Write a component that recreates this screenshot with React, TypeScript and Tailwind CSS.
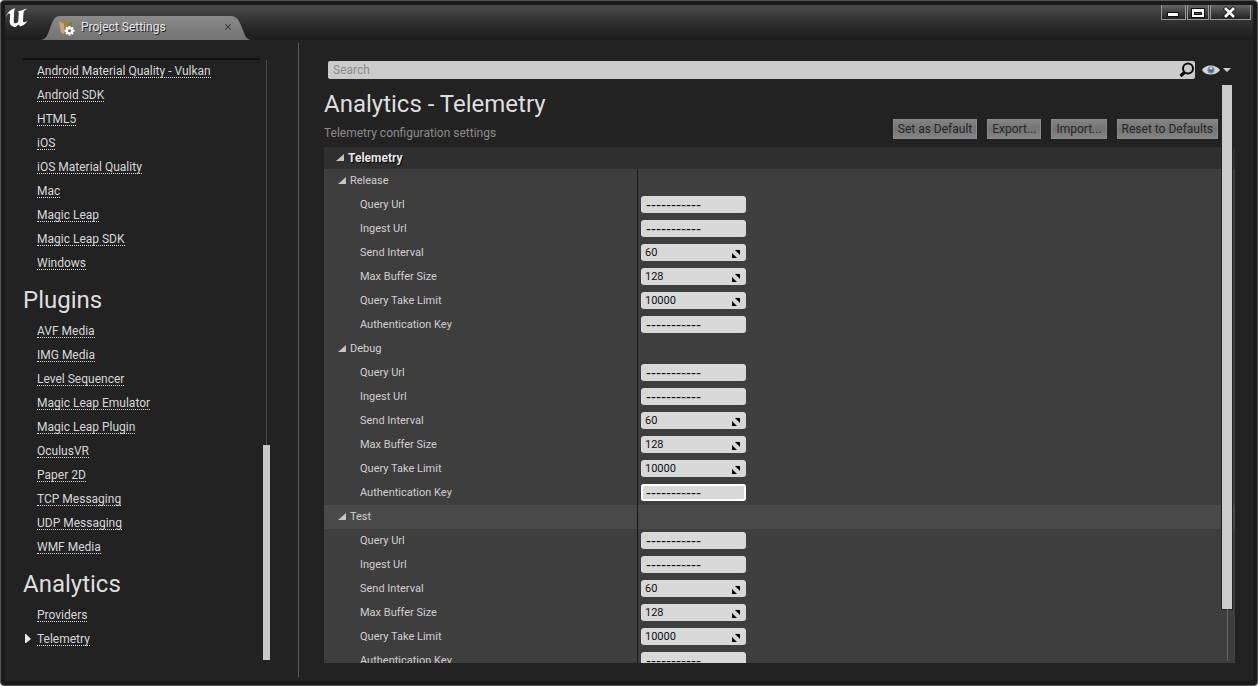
import React, { useState } from "react";

const platformLinks = [
  "Android Material Quality - Vulkan",
  "Android SDK",
  "HTML5",
  "iOS",
  "iOS Material Quality",
  "Mac",
  "Magic Leap",
  "Magic Leap SDK",
  "Windows",
];

const pluginLinks = [
  "AVF Media",
  "IMG Media",
  "Level Sequencer",
  "Magic Leap Emulator",
  "Magic Leap Plugin",
  "OculusVR",
  "Paper 2D",
  "TCP Messaging",
  "UDP Messaging",
  "WMF Media",
];

const analyticsLinks = ["Providers", "Telemetry"];

type Field = { label: string; value: string; numeric?: boolean };

const fields: Field[] = [
  { label: "Query Url", value: "-----------" },
  { label: "Ingest Url", value: "-----------" },
  { label: "Send Interval", value: "60", numeric: true },
  { label: "Max Buffer Size", value: "128", numeric: true },
  { label: "Query Take Limit", value: "10000", numeric: true },
  { label: "Authentication Key", value: "-----------" },
];

function UnrealLogo() {
  return (
    <svg viewBox="0 0 24 22" className="h-[22px] w-6" aria-hidden="true">
      <path
        d="M1 10.200C2 5.800 5.200 2.600 10.400 1.300C9.600 2.200 9.300 3.200 9.200 4.600L8.700 14C8.700 15.600 9.300 16.300 10.400 16.300C11.500 16.300 12.500 15.700 13.200 14.800L13.800 6C13.800 5.200 13.200 4.800 12.400 4.800C15 3.800 18.400 2.600 22.600 1.500C20 3 18.700 4.200 18.500 5.800L18 13.400C18 14.700 18.500 15.200 19.400 15.200C20.300 15.200 21.400 14.600 22.600 13.600C21.200 16.400 18.600 18.600 15.600 19.600L13.300 17.600L10.800 20C7.200 19.800 4.700 17.800 4.700 14.400L5.200 8C5.200 7 4.800 6.600 4 6.600C2.800 6.600 1.800 8.200 1 10.200Z"
        fill="#fff"
      />
    </svg>
  );
}

function TabIcon() {
  return (
    <svg viewBox="0 0 17 16" className="h-4 w-[17px]" aria-hidden="true">
      <path d="M1 1H6L7 2H14V9L10 14H5L3.500 13Z" fill="#a5814f" />
      <path d="M1 1L6 4V14L3 12.500Z" fill="#cfa772" />
      <path d="M12 2H14V7L9 5Z" fill="#73803a" />
      <path d="M11.500 6V15.500M6.500 10.700H16.500M8 7.500L15 14M15 7.500L8 14" stroke="#fff" strokeWidth="2" />
      <circle cx="11.500" cy="10.700" r="3.400" fill="#fff" />
      <circle cx="11.500" cy="10.700" r="1.500" fill="#6b6b6b" />
    </svg>
  );
}

function Expander() {
  return (
    <svg viewBox="0 0 8 8" className="size-2" aria-hidden="true">
      <path d="M8 0V7H0Z" fill="#c4c4c4" />
    </svg>
  );
}

function LinkList({ items, current }: { items: string[]; current?: string }) {
  return (
    <ul>
      {items.map((item) => (
        <li key={item} className="flex h-6 items-center">
          <span className="flex w-[14px] shrink-0">
            {item === current && (
              <svg viewBox="0 0 6 10" className="ml-0.5 h-[10px] w-1.5" aria-hidden="true">
                <path d="M0 0H1L6 5L1 9H0Z" fill="#e8e8e8" />
              </svg>
            )}
          </span>
          <a
            href="#"
            className="border-b border-dotted border-[#e0e0e0] text-xs leading-3 whitespace-nowrap text-[#d8d8d8]"
          >
            {item}
          </a>
        </li>
      ))}
    </ul>
  );
}

function SectionHeading({ children }: { children: React.ReactNode }) {
  return <h2 className="flex h-11 items-center pt-1.5 text-2xl text-[#dedede]">{children}</h2>;
}

function PropertyRow({ group, field, focused }: { group: string; field: Field; focused: boolean }) {
  const [value, setValue] = useState(field.value);
  const id = `${group}-${field.label}`.replace(/\s/g, "-").toLowerCase();
  return (
    <div className="flex h-6">
      <div className="flex w-[314px] shrink-0 items-center border-r border-[#181818] pl-9">
        <label htmlFor={id} className="text-[11px] leading-4 text-[#d0d0d0]">
          {field.label}
        </label>
      </div>
      <div className="flex items-start pt-[3px] pl-[3px]">
        <div
          className={
            focused
              ? "flex h-[17px] w-[105px] items-center rounded-[3px] bg-[#d8d8d8] px-1 ring-2 ring-white ring-inset"
              : "flex h-[17px] w-[105px] items-center rounded-[3px] bg-[#d8d8d8] px-1"
          }
        >
          <input
            id={id}
            value={value}
            onChange={(e) => setValue(e.target.value)}
            className={
              field.numeric
                ? "h-[15px] w-full min-w-0 bg-transparent text-[11px] leading-[15px] text-[#101010] outline-none"
                : "h-[15px] w-full min-w-0 bg-transparent pl-px font-['Liberation_Sans',sans-serif] text-[15px] leading-[15px] text-[#101010] outline-none"
            }
          />
          {field.numeric && (
            <svg viewBox="0 0 8 8" className="mt-0.5 mr-0.5 size-2 shrink-0" aria-hidden="true">
              <path d="M3 0H8V5ZM0 3L5 8H0Z" fill="#000" />
            </svg>
          )}
        </div>
      </div>
    </div>
  );
}

function PropertyGroup({ name, highlighted, focusedField }: { name: string; highlighted?: boolean; focusedField?: string }) {
  const [open, setOpen] = useState(true);
  return (
    <section>
      <div className={highlighted ? "flex h-6 bg-[#4a4a4a]" : "flex h-6"}>
        <button
          type="button"
          aria-expanded={open}
          onClick={() => setOpen(!open)}
          className="flex w-[314px] shrink-0 items-center gap-1 border-r border-[#181818] pl-[14px] text-[11px] leading-4 text-[#d0d0d0]"
        >
          <Expander />
          {name}
        </button>
      </div>
      {open &&
        fields.map((field) => (
          <PropertyRow key={field.label} group={name} field={field} focused={field.label === focusedField} />
        ))}
    </section>
  );
}

function ActionButton({ children }: { children: React.ReactNode }) {
  return (
    <button
      type="button"
      className="h-5 border border-[#8a8a8a] bg-linear-to-b from-[#848484] via-[#747474] to-[#848484] px-1 text-xs leading-4 whitespace-nowrap text-[#262626]"
    >
      {children}
    </button>
  );
}

function TitleBar() {
  return (
    <header className="flex h-[35px] shrink-0 items-start justify-between bg-linear-to-b from-[#4b4b4b] via-[#2a2a2a] via-60% to-[#1c1c1c]">
      <div className="flex h-full">
        <div className="pt-0.5">
          <UnrealLogo />
        </div>
        <div className="relative ml-3 flex h-full w-[210px] items-end">
          <svg viewBox="0 0 210 24" preserveAspectRatio="none" className="absolute bottom-0 left-0 h-6 w-full" aria-hidden="true">
            <defs>
              <linearGradient id="tab" x1="0" y1="0" x2="0" y2="1">
                <stop offset="0" stopColor="#8a8a8a" />
                <stop offset="1" stopColor="#737373" />
              </linearGradient>
            </defs>
            <path d="M0 24C5 23 6 20 8 15C11 8 12 0 19 0H190C197 0 199 7 202 14C204 20 205 23 210 24Z" fill="url(#tab)" />
          </svg>
          <div className="relative flex h-6 w-full items-center pr-5 pl-[17px]">
            <TabIcon />
            <span className="grow pb-0.5 pl-1.5 text-xs text-[#e8e8e8] [text-shadow:1px_1px_0_#222]">Project Settings</span>
            <button type="button" aria-label="Close tab" className="pb-0.5">
              <svg viewBox="0 0 6 6" className="size-1.5" aria-hidden="true">
                <path d="M0 0L6 6M6 0L0 6" stroke="#444" strokeWidth="1.200" />
              </svg>
            </button>
          </div>
        </div>
      </div>
      <div className="flex pr-0.5">
        <button type="button" aria-label="Minimize" className="h-[15px] w-[25px] border border-t-0 border-[#999] bg-linear-to-b from-[#666] to-[#242424]">
          <svg viewBox="0 0 23 14" className="h-[14px] w-full" aria-hidden="true">
            <rect x="5.500" y="7.500" width="11" height="4" fill="#fff" stroke="#111" />
          </svg>
        </button>
        <button type="button" aria-label="Maximize" className="ml-px h-[15px] w-[22px] border border-t-0 border-[#999] bg-linear-to-b from-[#666] to-[#242424]">
          <svg viewBox="0 0 20 14" className="h-[14px] w-full" aria-hidden="true">
            <rect x="3" y="3" width="14" height="10" fill="#111" />
            <path d="M4 4H16V12H4ZM6 7V10H14V7Z" fill="#fff" fillRule="evenodd" />
            <rect x="7" y="8" width="6" height="1" fill="#555" />
          </svg>
        </button>
        <button type="button" aria-label="Close window" className="ml-px h-[15px] w-[41px] border border-t-0 border-[#999] bg-linear-to-b from-[#666] to-[#242424]">
          <svg viewBox="0 0 39 14" className="h-[14px] w-full" aria-hidden="true">
            <path d="M13.500 2.500L23.500 12.500M23.500 2.500L13.500 12.500" stroke="#111" strokeWidth="4.500" />
            <path d="M14 3L23 12M23 3L14 12" stroke="#fff" strokeWidth="2.800" />
          </svg>
        </button>
      </div>
    </header>
  );
}

function Sidebar() {
  return (
    <nav className="flex w-[293px] shrink-0 pt-[18px] pr-7 pb-[21px] pl-[18px]">
      <div className="grow overflow-hidden border-t-2 border-[#101010]">
        <div className="-mt-px">
          <LinkList items={platformLinks} />
          <SectionHeading>Plugins</SectionHeading>
          <LinkList items={pluginLinks} />
          <SectionHeading>Analytics</SectionHeading>
          <LinkList items={analyticsLinks} current="Telemetry" />
        </div>
      </div>
      <div className="ml-0.5 flex w-2 shrink-0 flex-col items-center pt-0.5">
        <div className="w-px grow-[385] bg-[#4a4a4a]" />
        <div className="w-[7px] grow-[215] bg-[#c8c8c8]" />
      </div>
    </nav>
  );
}

export default function App() {
  const [query, setQuery] = useState("");
  return (
    <div className="flex h-screen flex-col overflow-hidden rounded-sm border border-[#555] bg-[#1a1a1a] p-1 font-[Roboto,sans-serif]">
      <TitleBar />
      <div className="flex min-h-0 grow bg-[#222]">
        <Sidebar />
        <div className="mt-[3px] mb-1 w-px shrink-0 bg-[#5a5a5a]" />
        <main className="flex min-w-0 grow flex-col pt-[21px] pr-[18px] pb-[18px] pl-[25px]">
          <div className="flex items-center pl-1">
            <div className="flex h-[18px] grow items-center rounded-[2px] bg-[#cbcbcb] pl-[5px]">
              <input
                type="text"
                aria-label="Search"
                placeholder="Search"
                value={query}
                onChange={(e) => setQuery(e.target.value)}
                className="h-4 min-w-0 grow bg-transparent text-xs leading-4 text-[#222] outline-none placeholder:text-[#8c8c8c]"
              />
              <svg viewBox="0 0 16 16" className="size-4" aria-hidden="true">
                <circle cx="9" cy="6.500" r="5" fill="none" stroke="#0a0a0a" strokeWidth="2" />
                <path d="M5.500 10.500L1.500 14" stroke="#0a0a0a" strokeWidth="3" />
              </svg>
            </div>
            <button type="button" aria-label="View options" className="ml-[7px] mr-1 flex items-center gap-[3px]">
              <svg viewBox="0 0 18 12" className="h-3 w-[18px]" aria-hidden="true">
                <path d="M0 6C3 0 14 0 18 6C14 12 3 12 0 6Z" fill="#d6d6d6" />
                <circle cx="9" cy="6" r="3.500" fill="#6d87a8" />
                <circle cx="9" cy="6" r="1.500" fill="#34495e" />
                <circle cx="9" cy="4.500" r="1.200" fill="#dbe6f0" />
              </svg>
              <svg viewBox="0 0 8 4" className="h-1 w-2" aria-hidden="true">
                <path d="M0 0H8L4 4Z" fill="#d0d0d0" />
              </svg>
            </button>
          </div>
          <div className="relative flex min-h-0 grow flex-col">
            <div className="flex h-[68px] shrink-0 justify-between pr-[17px]">
              <div>
                <h1 className="mt-[9px] text-2xl leading-8 text-[#dedede]">Analytics - Telemetry</h1>
                <p className="mt-[5px] text-xs leading-4 text-[#8c8c8c]">Telemetry configuration settings</p>
              </div>
              <div className="flex items-end gap-[10px] pb-2">
                <ActionButton>Set as Default</ActionButton>
                <ActionButton>Export...</ActionButton>
                <ActionButton>Import...</ActionButton>
                <ActionButton>Reset to Defaults</ActionButton>
              </div>
            </div>
            <div className="min-h-0 grow overflow-hidden rounded-t-[3px] bg-[#3e3e3e]">
              <h2 className="h-[22px] bg-[#2f2f2f]">
                <button type="button" className="flex h-full w-full items-center gap-1 pl-3 text-xs font-bold text-[#e6e6e6] [text-shadow:1px_1px_0_#000]">
                  <Expander />
                  Telemetry
                </button>
              </h2>
              <PropertyGroup name="Release" />
              <PropertyGroup name="Debug" focusedField="Authentication Key" />
              <PropertyGroup name="Test" highlighted />
            </div>
            <div className="absolute top-1.5 right-[3px] bottom-0.5 flex w-[10px] flex-col items-center">
              <div className="w-full grow-[523] bg-[#cbcbcb] ring-1 ring-[#222]" />
              <div className="w-px grow-[52] bg-[#666]" />
            </div>
          </div>
        </main>
      </div>
    </div>
  );
}
